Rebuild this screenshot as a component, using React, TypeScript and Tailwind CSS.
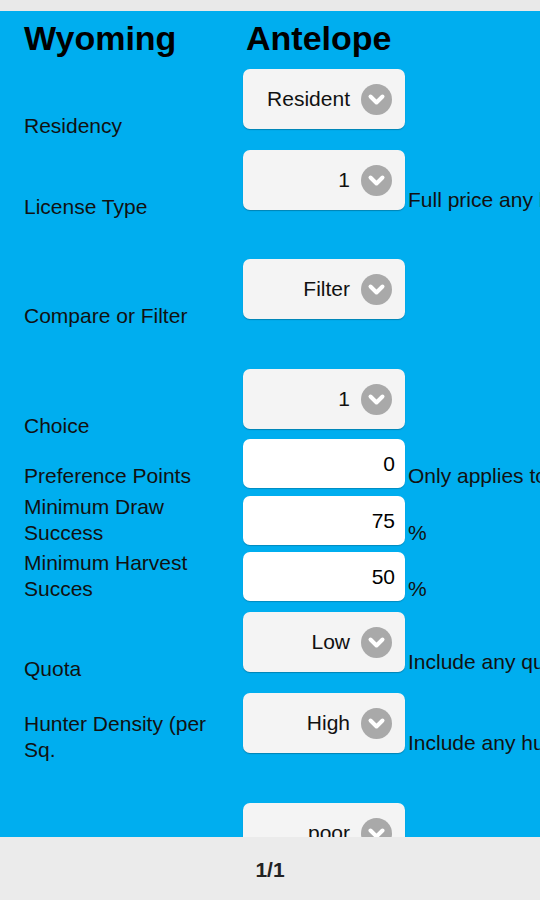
import React from 'react';

type Row = {
  label: string;
  kind: 'select' | 'input';
  value: string;
  suffix?: string;
  gap: string;
};

const rows: Row[] = [
  { label: 'Residency', kind: 'select', value: 'Resident', gap: 'mt-[14px]' },
  { label: 'License Type', kind: 'select', value: '1', suffix: 'Full price any license', gap: 'mt-[21px]' },
  { label: 'Compare or Filter', kind: 'select', value: 'Filter', gap: 'mt-[49px]' },
  { label: 'Choice', kind: 'select', value: '1', gap: 'mt-[50px]' },
  { label: 'Preference Points', kind: 'input', value: '0', suffix: 'Only applies to draw', gap: 'mt-[10px]' },
  { label: 'Minimum Draw Success', kind: 'input', value: '75', suffix: '%', gap: 'mt-[8px]' },
  { label: 'Minimum Harvest Succes', kind: 'input', value: '50', suffix: '%', gap: 'mt-[7px]' },
  { label: 'Quota', kind: 'select', value: 'Low', suffix: 'Include any quota', gap: 'mt-[11px]' },
  { label: 'Hunter Density (per Sq.', kind: 'select', value: 'High', suffix: 'Include any hunter density', gap: 'mt-[21px]' },
  { label: '', kind: 'select', value: 'poor', gap: 'mt-[50px]' },
];

const Chevron = () => (
  <span className="w-[31px] h-[31px] rounded-full bg-[#a9a9a9] flex items-center justify-center shrink-0">
    <svg width="31" height="31" viewBox="0 0 31 31">
      <polyline points="9.5,12.5 15.5,18.5 21.5,12.5" fill="none" stroke="#ffffff" strokeWidth="4" strokeLinecap="round" strokeLinejoin="round" />
    </svg>
  </span>
);

const FormRow: React.FC<{ row: Row }> = ({ row }) => {
  const isSelect = row.kind === 'select';
  return (
    <div className={`flex items-end ${isSelect ? 'h-[60px]' : 'h-[49px]'} ${row.gap}`}>
      <div className={`w-[219px] shrink-0 text-[21px] leading-[26px] text-[#111] pr-2 ${isSelect ? 'mb-[-10px]' : 'mb-[-1px]'}`}>
        {row.label}
      </div>
      {isSelect ? (
        <div className="w-[162px] h-[60px] shrink-0 rounded-[7px] bg-[#f4f4f4] shadow-[0_1px_1px_rgba(0,0,0,0.25)] flex items-center justify-end pr-[13px] gap-[11px]">
          <span className="text-[21px] text-[#111]">{row.value}</span>
          <Chevron />
        </div>
      ) : (
        <div className="w-[162px] h-[49px] shrink-0 rounded-[7px] bg-white shadow-[0_1px_1px_rgba(0,0,0,0.2)] flex items-center justify-end pr-[10px]">
          <span className="text-[21px] text-black">{row.value}</span>
        </div>
      )}
      {row.suffix && (
        <span className={`ml-[3px] whitespace-nowrap text-[21px] leading-[26px] text-[#111] ${isSelect ? 'mb-[-3px]' : 'mb-[-1px]'}`}>
          {row.suffix}
        </span>
      )}
    </div>
  );
};

export default function App() {
  return (
    <div className="w-[540px] h-[900px] flex flex-col overflow-hidden" style={{ fontFamily: '"Liberation Sans", Arial, sans-serif' }}>
      <div className="h-[11px] shrink-0 bg-[#e9e9e9]" />
      <div className="flex-1 min-h-0 overflow-hidden bg-[#00aeef] pt-[10px] pl-[24px]">
        <div className="flex h-[34px] text-[34px] leading-[34px] font-bold text-black">
          <span className="w-[222px] shrink-0">Wyoming</span>
          <span>Antelope</span>
        </div>
        {rows.map((row, i) => (
          <FormRow key={i} row={row} />
        ))}
      </div>
      <div className="h-[63px] shrink-0 bg-[#ebebeb] flex items-center justify-center pt-[3px]">
        <span className="text-[21px] font-bold text-[#222]">1/1</span>
      </div>
    </div>
  );
}
